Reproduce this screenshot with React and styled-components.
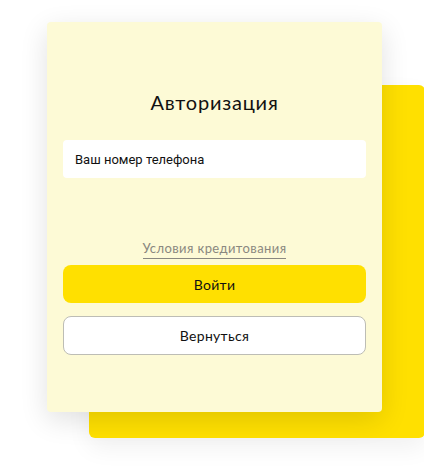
import React from "react";
import styled, { createGlobalStyle } from "styled-components";

const Global = createGlobalStyle`
  html, body { margin: 0; padding: 0; background: #fff; }
  body { font-family: "Open Sans", "Liberation Sans", sans-serif; color: #111; }
`;

const Stage = styled.div`
  position: relative;
  width: 424px;
  height: 472px;
  padding: 22px 0 0 47px;
  box-sizing: border-box;
  overflow: hidden;
`;

const BackCard = styled.div`
  position: absolute;
  left: 89px;
  top: 85px;
  width: 336px;
  height: 353px;
  background: #ffe000;
  border-radius: 6px;
  box-shadow: 0 10px 24px rgba(0, 0, 0, 0.06);
`;

const Card = styled.div`
  position: relative;
  width: 335px;
  height: 390px;
  box-sizing: border-box;
  background: #fdfad6;
  border-radius: 4px;
  box-shadow: 0 8px 28px rgba(0, 0, 0, 0.12);
  padding: 66px 16px 0;
  display: flex;
  flex-direction: column;
  align-items: center;
`;

const Title = styled.h1`
  margin: 0;
  font-family: "Lato", "Open Sans", sans-serif;
  font-weight: 400;
  font-size: 20px;
  line-height: 28px;
  letter-spacing: 0.8px;
  color: #111;
`;

const Field = styled.div`
  align-self: stretch;
  margin-top: 24px;
  height: 38px;
  background: #fff;
  border-radius: 4px;
  display: flex;
  align-items: center;
  padding: 0 12px;
  font-family: "Roboto", "Liberation Sans", sans-serif;
  font-size: 13px;
  color: #111;
`;

const LinkText = styled.span`
  margin-top: 62px;
  font-family: "Lato", "Open Sans", sans-serif;
  font-size: 13px;
  line-height: 17px;
  letter-spacing: 0.4px;
  color: #8a8880;
  border-bottom: 1px solid #8a8880;
  padding-bottom: 1px;
`;

const Button = styled.div`
  align-self: stretch;
  margin-top: ${(p) => p.$mt}px;
  height: ${(p) => (p.$outline ? 37 : 38)}px;
  border-radius: 8px;
  background: ${(p) => (p.$outline ? "#fff" : "#ffe000")};
  border: ${(p) => (p.$outline ? "1px solid #bdbdb5" : "none")};
  display: flex;
  align-items: center;
  justify-content: center;
  font-family: "Lato", "Open Sans", sans-serif;
  font-size: 14px;
  letter-spacing: 0.3px;
  color: #111;
`;

export default function App() {
  return (
    <>
      <Global />
      <Stage>
        <BackCard />
        <Card>
          <Title>Авторизация</Title>
          <Field>Ваш номер телефона</Field>
          <LinkText>Условия кредитования</LinkText>
          <Button $mt={6}>Войти</Button>
          <Button $mt={13} $outline>Вернуться</Button>
        </Card>
      </Stage>
    </>
  );
}
